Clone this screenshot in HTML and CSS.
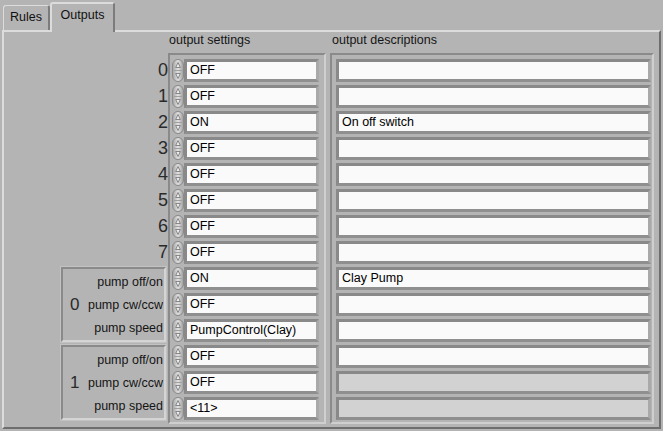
FILE: index.html
```html
<!DOCTYPE html>
<html>
<head>
<meta charset="utf-8">
<link rel="stylesheet" href="styles.css">
</head>
<body>
<div class="tabs">
  <div class="tab">Rules</div>
  <div class="tab active">Outputs</div>
</div>
<div class="panel">
  <div class="headers">
    <span></span>
    <span class="h-set">output settings</span>
    <span class="h-desc">output descriptions</span>
  </div>
  <div class="main">
    <div class="labels">
      <div class="num">0</div>
      <div class="num">1</div>
      <div class="num">2</div>
      <div class="num">3</div>
      <div class="num">4</div>
      <div class="num">5</div>
      <div class="num">6</div>
      <div class="num">7</div>
      <div class="group">
        <div class="gnum">0</div>
        <div class="glabels"><div>pump off/on</div><div>pump cw/ccw</div><div>pump speed</div></div>
      </div>
      <div class="group">
        <div class="gnum">1</div>
        <div class="glabels"><div>pump off/on</div><div>pump cw/ccw</div><div>pump speed</div></div>
      </div>
    </div>
    <div class="frame settings">
      <div class="row"><div class="spin"><svg width="10" height="21" viewBox="0 0 10 21"><path d="M5 2.5 L7.3 7.5 H2.7 Z" fill="#eeeeee" stroke="#6e6e6e" stroke-width="0.8"/><path d="M5 18.5 L7.3 13.5 H2.7 Z" fill="#eeeeee" stroke="#6e6e6e" stroke-width="0.8"/><line x1="1" y1="10.5" x2="9" y2="10.5" stroke="#a0a0a0" stroke-width="1"/></svg></div><div class="field">OFF</div></div>
      <div class="row"><div class="spin"><svg width="10" height="21" viewBox="0 0 10 21"><path d="M5 2.5 L7.3 7.5 H2.7 Z" fill="#eeeeee" stroke="#6e6e6e" stroke-width="0.8"/><path d="M5 18.5 L7.3 13.5 H2.7 Z" fill="#eeeeee" stroke="#6e6e6e" stroke-width="0.8"/><line x1="1" y1="10.5" x2="9" y2="10.5" stroke="#a0a0a0" stroke-width="1"/></svg></div><div class="field">OFF</div></div>
      <div class="row"><div class="spin"><svg width="10" height="21" viewBox="0 0 10 21"><path d="M5 2.5 L7.3 7.5 H2.7 Z" fill="#eeeeee" stroke="#6e6e6e" stroke-width="0.8"/><path d="M5 18.5 L7.3 13.5 H2.7 Z" fill="#eeeeee" stroke="#6e6e6e" stroke-width="0.8"/><line x1="1" y1="10.5" x2="9" y2="10.5" stroke="#a0a0a0" stroke-width="1"/></svg></div><div class="field">ON</div></div>
      <div class="row"><div class="spin"><svg width="10" height="21" viewBox="0 0 10 21"><path d="M5 2.5 L7.3 7.5 H2.7 Z" fill="#eeeeee" stroke="#6e6e6e" stroke-width="0.8"/><path d="M5 18.5 L7.3 13.5 H2.7 Z" fill="#eeeeee" stroke="#6e6e6e" stroke-width="0.8"/><line x1="1" y1="10.5" x2="9" y2="10.5" stroke="#a0a0a0" stroke-width="1"/></svg></div><div class="field">OFF</div></div>
      <div class="row"><div class="spin"><svg width="10" height="21" viewBox="0 0 10 21"><path d="M5 2.5 L7.3 7.5 H2.7 Z" fill="#eeeeee" stroke="#6e6e6e" stroke-width="0.8"/><path d="M5 18.5 L7.3 13.5 H2.7 Z" fill="#eeeeee" stroke="#6e6e6e" stroke-width="0.8"/><line x1="1" y1="10.5" x2="9" y2="10.5" stroke="#a0a0a0" stroke-width="1"/></svg></div><div class="field">OFF</div></div>
      <div class="row"><div class="spin"><svg width="10" height="21" viewBox="0 0 10 21"><path d="M5 2.5 L7.3 7.5 H2.7 Z" fill="#eeeeee" stroke="#6e6e6e" stroke-width="0.8"/><path d="M5 18.5 L7.3 13.5 H2.7 Z" fill="#eeeeee" stroke="#6e6e6e" stroke-width="0.8"/><line x1="1" y1="10.5" x2="9" y2="10.5" stroke="#a0a0a0" stroke-width="1"/></svg></div><div class="field">OFF</div></div>
      <div class="row"><div class="spin"><svg width="10" height="21" viewBox="0 0 10 21"><path d="M5 2.5 L7.3 7.5 H2.7 Z" fill="#eeeeee" stroke="#6e6e6e" stroke-width="0.8"/><path d="M5 18.5 L7.3 13.5 H2.7 Z" fill="#eeeeee" stroke="#6e6e6e" stroke-width="0.8"/><line x1="1" y1="10.5" x2="9" y2="10.5" stroke="#a0a0a0" stroke-width="1"/></svg></div><div class="field">OFF</div></div>
      <div class="row"><div class="spin"><svg width="10" height="21" viewBox="0 0 10 21"><path d="M5 2.5 L7.3 7.5 H2.7 Z" fill="#eeeeee" stroke="#6e6e6e" stroke-width="0.8"/><path d="M5 18.5 L7.3 13.5 H2.7 Z" fill="#eeeeee" stroke="#6e6e6e" stroke-width="0.8"/><line x1="1" y1="10.5" x2="9" y2="10.5" stroke="#a0a0a0" stroke-width="1"/></svg></div><div class="field">OFF</div></div>
      <div class="row"><div class="spin"><svg width="10" height="21" viewBox="0 0 10 21"><path d="M5 2.5 L7.3 7.5 H2.7 Z" fill="#eeeeee" stroke="#6e6e6e" stroke-width="0.8"/><path d="M5 18.5 L7.3 13.5 H2.7 Z" fill="#eeeeee" stroke="#6e6e6e" stroke-width="0.8"/><line x1="1" y1="10.5" x2="9" y2="10.5" stroke="#a0a0a0" stroke-width="1"/></svg></div><div class="field">ON</div></div>
      <div class="row"><div class="spin"><svg width="10" height="21" viewBox="0 0 10 21"><path d="M5 2.5 L7.3 7.5 H2.7 Z" fill="#eeeeee" stroke="#6e6e6e" stroke-width="0.8"/><path d="M5 18.5 L7.3 13.5 H2.7 Z" fill="#eeeeee" stroke="#6e6e6e" stroke-width="0.8"/><line x1="1" y1="10.5" x2="9" y2="10.5" stroke="#a0a0a0" stroke-width="1"/></svg></div><div class="field">OFF</div></div>
      <div class="row"><div class="spin"><svg width="10" height="21" viewBox="0 0 10 21"><path d="M5 2.5 L7.3 7.5 H2.7 Z" fill="#eeeeee" stroke="#6e6e6e" stroke-width="0.8"/><path d="M5 18.5 L7.3 13.5 H2.7 Z" fill="#eeeeee" stroke="#6e6e6e" stroke-width="0.8"/><line x1="1" y1="10.5" x2="9" y2="10.5" stroke="#a0a0a0" stroke-width="1"/></svg></div><div class="field">PumpControl(Clay)</div></div>
      <div class="row"><div class="spin"><svg width="10" height="21" viewBox="0 0 10 21"><path d="M5 2.5 L7.3 7.5 H2.7 Z" fill="#eeeeee" stroke="#6e6e6e" stroke-width="0.8"/><path d="M5 18.5 L7.3 13.5 H2.7 Z" fill="#eeeeee" stroke="#6e6e6e" stroke-width="0.8"/><line x1="1" y1="10.5" x2="9" y2="10.5" stroke="#a0a0a0" stroke-width="1"/></svg></div><div class="field">OFF</div></div>
      <div class="row"><div class="spin"><svg width="10" height="21" viewBox="0 0 10 21"><path d="M5 2.5 L7.3 7.5 H2.7 Z" fill="#eeeeee" stroke="#6e6e6e" stroke-width="0.8"/><path d="M5 18.5 L7.3 13.5 H2.7 Z" fill="#eeeeee" stroke="#6e6e6e" stroke-width="0.8"/><line x1="1" y1="10.5" x2="9" y2="10.5" stroke="#a0a0a0" stroke-width="1"/></svg></div><div class="field">OFF</div></div>
      <div class="row"><div class="spin"><svg width="10" height="21" viewBox="0 0 10 21"><path d="M5 2.5 L7.3 7.5 H2.7 Z" fill="#eeeeee" stroke="#6e6e6e" stroke-width="0.8"/><path d="M5 18.5 L7.3 13.5 H2.7 Z" fill="#eeeeee" stroke="#6e6e6e" stroke-width="0.8"/><line x1="1" y1="10.5" x2="9" y2="10.5" stroke="#a0a0a0" stroke-width="1"/></svg></div><div class="field">&lt;11&gt;</div></div>
    </div>
    <div class="frame desc">
      <div class="field"></div>
      <div class="field"></div>
      <div class="field">On off switch</div>
      <div class="field"></div>
      <div class="field"></div>
      <div class="field"></div>
      <div class="field"></div>
      <div class="field"></div>
      <div class="field">Clay Pump</div>
      <div class="field"></div>
      <div class="field"></div>
      <div class="field"></div>
      <div class="field disabled"></div>
      <div class="field disabled"></div>
    </div>
  </div>
</div>
</body>
</html>
```
FILE: styles.css
```css
* { box-sizing: border-box; }
html, body {
  margin: 0;
  padding: 0;
  background: #b4b4b4;
  font-family: "Liberation Sans", Arial, sans-serif;
  font-size: 12.5px;
  color: #111;
}
body { width: 663px; height: 431px; overflow: hidden; }

.tabs {
  height: 30px;
  display: flex;
  align-items: flex-end;
  padding-left: 3px;
}
.tab {
  width: 47px;
  height: 25px;
  border: 1px solid #7c7c7c;
  border-left-color: #dcdcdc;
  border-top-color: #dcdcdc;
  border-bottom: none;
  border-right: 2px solid #7c7c7c;
  border-radius: 3px 3px 0 0;
  background: #b4b4b4;
  text-align: center;
  line-height: 22px;
}
.tab.active {
  width: 65px;
  height: 30px;
  line-height: 22px;
  position: relative;
  z-index: 1;
  margin-bottom: -2px;
  border-left: 2px solid #dcdcdc;
  border-top: 2px solid #dcdcdc;
}

.panel {
  margin-left: 2px;
  width: 659px;
  height: 399px;
  border: 2px solid;
  border-color: #dcdcdc #6e6e6e #6e6e6e #dcdcdc;
}

.headers, .main {
  display: grid;
  grid-template-columns: 164px 158px 328px;
}
.headers {
  height: 21px;
  padding-top: 1px;
  line-height: 15px;
  color: #151515;
}
.h-set { padding-left: 1px; }
.h-desc { padding-left: 6px; }

.labels {
  padding-top: 6px;
  display: flex;
  flex-direction: column;
  gap: 3px;
}
.num {
  height: 23px;
  line-height: 23px;
  text-align: right;
  font-size: 18px;
  color: #2a2a2a;
}
.group {
  height: 75px;
  margin-left: 57px;
  margin-right: 2px;
  border: 2px solid;
  border-color: #8a8a8a #d4d4d4 #d4d4d4 #8a8a8a;
  box-shadow: 0 0 0 1px #c2c2c2;
  display: flex;
  align-items: center;
}
.gnum {
  width: 22px;
  padding-left: 7px;
  font-size: 17px;
  color: #2a2a2a;
}
.glabels {
  flex: 1;
  align-self: stretch;
  display: flex;
  flex-direction: column;
  padding-top: 1px;
}
.glabels div {
  flex: 1;
  display: flex;
  align-items: center;
  justify-content: flex-end;
  padding-right: 1px;
  color: #151515;
}

.frame {
  height: 371px;
  border: 2px solid;
  border-color: #8a8a8a #cfcfcf #cfcfcf #8a8a8a;
  display: flex;
  flex-direction: column;
  gap: 3px;
}
.settings { padding: 4px 3px 2px 2px; }
.desc { margin-left: 4px; padding: 4px 1px 2px 4px; }

.row {
  display: flex;
  height: 23px;
}
.spin {
  width: 12px;
  height: 23px;
  border: 1px solid #8a8a8a;
  border-radius: 6px;
  background: linear-gradient(90deg, #a6a6a6, #e2e2e2 50%, #a2a2a2);
  display: flex;
  align-items: center;
  justify-content: center;
}
.spin svg { display: block; }

.field {
  height: 23px;
  border: 3px solid;
  border-color: #898989 #a9a9a9 #8f8f8f #898989;
  background: #fafafa;
  padding-left: 3px;
  line-height: 17px;
  color: #000;
  white-space: nowrap;
  overflow: hidden;
}
.settings .field { width: 135px; }
.field.disabled { background: #d2d2d2; }
```
